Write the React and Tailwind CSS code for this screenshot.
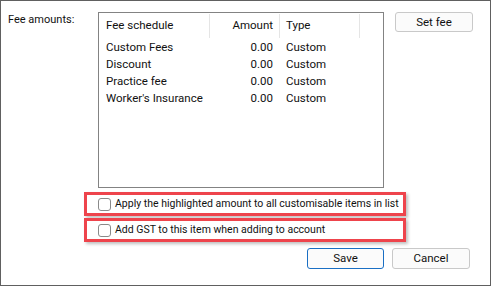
import React from "react";

const fees = [
  { name: "Custom Fees", amount: "0.00", type: "Custom" },
  { name: "Discount", amount: "0.00", type: "Custom" },
  { name: "Practice fee", amount: "0.00", type: "Custom" },
  { name: "Worker's Insurance", amount: "0.00", type: "Custom" },
];

function Checkbox({ label }) {
  return (
    <label className="flex items-center gap-[4px] h-full pl-[11px] whitespace-nowrap text-[10.5px]">
      <span className="w-[13px] h-[13px] rounded-[3px] border border-[#8a8a8a] bg-white shrink-0" />
      <span>{label}</span>
    </label>
  );
}

function App() {
  return (
    <div
      className="w-[491px] h-[286px] border border-[#606060] bg-white text-[11.5px] text-[#111] overflow-hidden"
      style={{ fontFamily: "Roboto, 'Liberation Sans', sans-serif" }}
    >
      <div className="flex pt-[11px] pl-[7px]">
        <div className="w-[90px] pt-[1px] leading-[13px] text-[11px]">Fee amounts:</div>

        {/* fee list */}
        <div className="w-[286px] h-[176px] border border-[#838383] bg-white">
          <div className="flex h-[24px] mt-[1px] items-center">
            <div className="w-[110px] pl-[7px]">Fee schedule</div>
            <div className="w-[1px] h-[24px] bg-[#e5e5e5]" />
            <div className="w-[69px] text-right pr-[6px]">Amount</div>
            <div className="w-[1px] h-[24px] bg-[#e5e5e5]" />
            <div className="w-[79px] pl-[6px]">Type</div>
            <div className="w-[1px] h-[24px] bg-[#e5e5e5]" />
          </div>
          <div className="pt-[1px]">
            {fees.map((f) => (
              <div key={f.name} className="flex h-[17px] items-center">
                <div className="w-[111px] pl-[7px]">{f.name}</div>
                <div className="w-[69px] text-right pr-[6px]">{f.amount}</div>
                <div className="pl-[7px]">{f.type}</div>
              </div>
            ))}
          </div>
        </div>

        <button className="ml-[11px] w-[78px] h-[20px] rounded-[3px] border border-[#c9c9c9] bg-[#fbfbfb] leading-[16px]">
          Set fee
        </button>
      </div>

      {/* highlighted options */}
      <div className="ml-[83px] mt-[4px] w-[322px] flex flex-col gap-[2px]">
        <div className="h-[24px] border-[3px] border-[#ee444c] shadow-[2px_2px_3px_rgba(0,0,0,0.25)]">
          <Checkbox label="Apply the highlighted amount to all customisable items in list" />
        </div>
        <div className="h-[24px] border-[3px] border-[#ee444c] shadow-[2px_2px_3px_rgba(0,0,0,0.25)]">
          <Checkbox label="Add GST to this item when adding to account" />
        </div>
      </div>

      <div className="flex justify-end gap-[8px] mt-[6px] pr-[20px]">
        <button className="w-[77px] h-[21px] rounded-[3px] border border-[#1a6fc4] bg-[#fbfbfb]">
          Save
        </button>
        <button className="w-[78px] h-[21px] rounded-[3px] border border-[#c9c9c9] bg-[#fbfbfb]">
          Cancel
        </button>
      </div>
    </div>
  );
}

export default App;
